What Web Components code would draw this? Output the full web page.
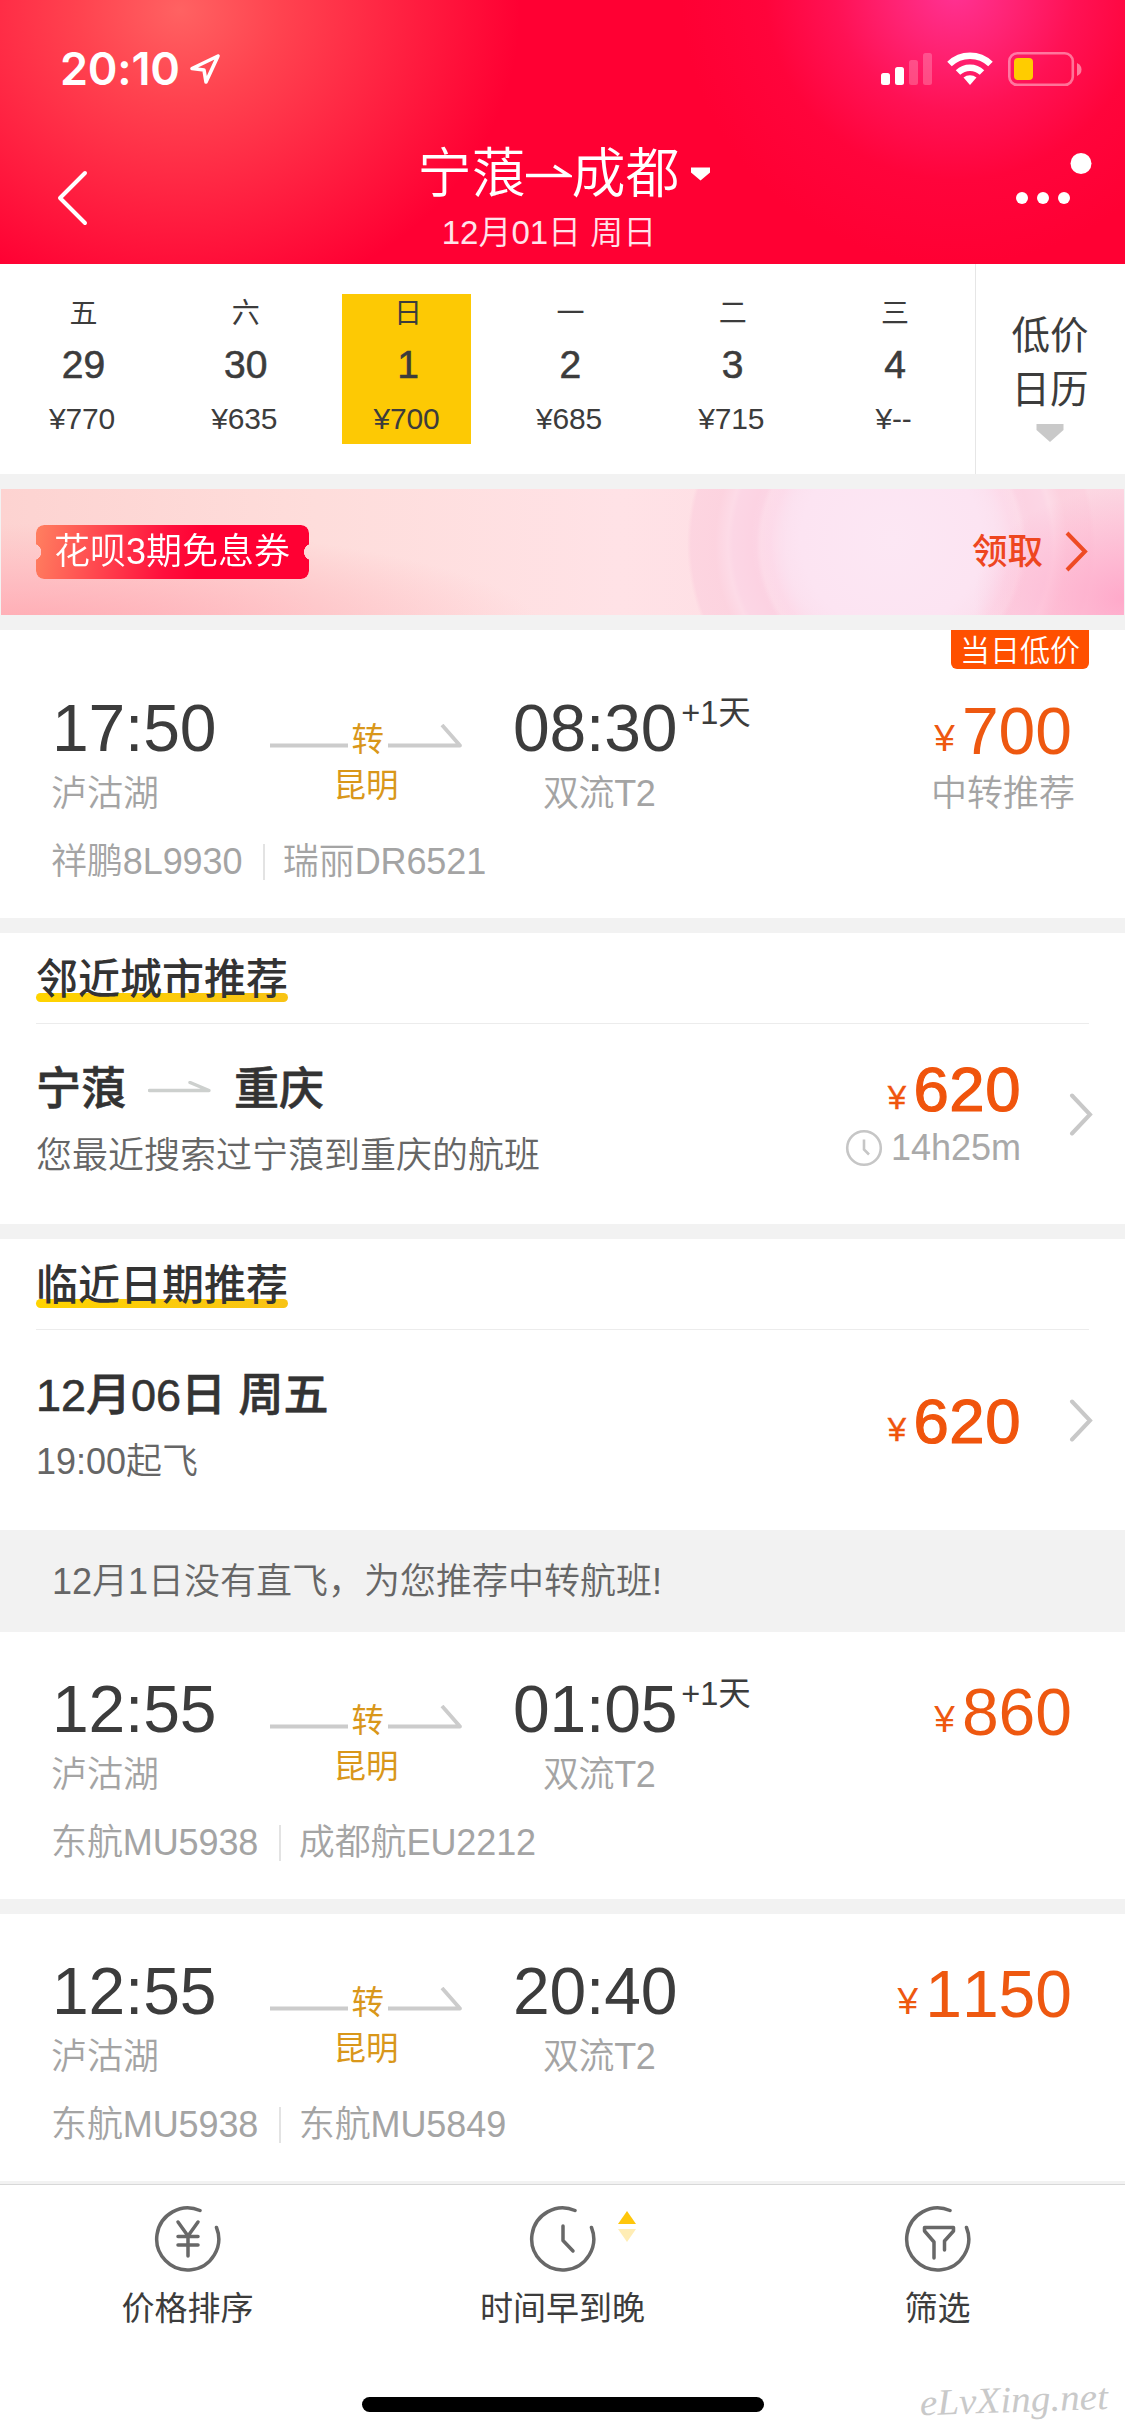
<!DOCTYPE html>
<html lang="zh-CN">
<head>
<meta charset="utf-8">
<title>宁蒗 → 成都</title>
<style>
html,body{margin:0;padding:0;background:#fff}
body{width:1125px;height:2436px;overflow:hidden;font-family:"Liberation Sans","Noto Sans CJK SC",sans-serif;color:#3c3c3c;font-kerning:none}
</style>
</head>
<body>
<flight-app></flight-app>
<script>
const define = (name, markup) => customElements.define(name, class extends HTMLElement {
  connectedCallback() {
    if (this.shadowRoot) return;
    const t = document.createElement('template');
    t.innerHTML = typeof markup === 'function' ? markup(this) : markup;
    this.attachShadow({mode: 'open'}).append(t.content.cloneNode(true));
  }
});

define('status-bar', `<style>
:host{display:flex;height:66px;padding:36px 43px 0 60px;align-items:center;color:#fff}
.t{font:600 45px/66px Inter,sans-serif;letter-spacing:-.2px}
.loc{margin-left:9px}.sp{flex:1}svg{display:block}
</style><span class="t">20:10</span>
<svg class="loc" width="32" height="32" viewBox="0 0 32 32"><path d="M29 3 L3 15.5 L15 17 L17 29 Z" fill="none" stroke="#fff" stroke-width="3.6" stroke-linejoin="round"/></svg>
<span class="sp"></span>
<svg width="202" height="36" viewBox="881 51 202 36"><g fill="#fff"><rect x="882" y="73" width="9" height="12" rx="2.5"/><rect x="896" y="67" width="9" height="18" rx="2.5"/><g opacity=".22"><rect x="910" y="60" width="9" height="25" rx="2.5"/><rect x="924" y="53" width="9" height="32" rx="2.5"/></g></g>
<g fill="none" stroke="#fff" stroke-width="6.500"><path d="M950.500 64 A29.500 29.500 0 0 1 991.500 64"/><path d="M959 72.500 A17.500 17.500 0 0 1 983 72.500"/></g><path d="M964.500 77.500 A10.500 10.500 0 0 1 977.500 77.500 L971 85Z" fill="#fff"/>
<rect x="1010.300" y="53.300" width="63.500" height="31.500" rx="8" fill="none" stroke="#fff" stroke-opacity=".42" stroke-width="2.6"/><rect x="1015" y="58" width="19" height="22" rx="4" fill="#ffcc00"/><path d="M1078 63 q4.500 2 4.500 6.500 t-4.500 6.500z" fill="#fff" opacity=".45"/></svg>`);

define('nav-bar', `<style>
:host{display:flex;height:162px;box-sizing:border-box;padding:0 30px 0 55px;color:#fff;font-weight:350;justify-content:space-between}
.back{margin-top:68px}.more{margin-top:50px}svg{display:block}
.mid{display:flex;flex-direction:column;align-items:center;width:300px;margin-left:23px}
.title{display:flex;font-size:54px;line-height:56px;margin-top:44px;white-space:nowrap;align-items:center}
.title svg{flex:none}.sub{font-size:33px;line-height:34px;margin:14px 29px 0 0;color:#ffe3ea;white-space:nowrap}
</style>
<svg class="back" width="34" height="56" viewBox="0 0 34 56"><path d="M30 3 L5 28 L30 53" fill="none" stroke="#fff" stroke-width="4" stroke-linecap="round" stroke-linejoin="round"/></svg>
<div class="mid"><div class="title"><slot name="from"></slot><svg width="46" height="30" viewBox="0 0 46 30"><path d="M0 16.500H43L28 7" fill="none" stroke="#fff" stroke-width="3.300"/></svg><slot name="to"></slot><svg width="30" height="30" viewBox="0 0 30 30"><path d="M11 8.500H30V13.500L20.500 21.500L11 13.500Z" fill="#fff"/></svg></div><div class="sub"><slot name="date"></slot></div></div>
<svg class="more" width="80" height="60" viewBox="1016 152 80 60"><g fill="#fff"><circle cx="1023" cy="198" r="6"/><circle cx="1044" cy="198" r="6"/><circle cx="1065" cy="198" r="6"/><circle cx="1082" cy="163.500" r="10.500"/></g></svg>`);

define('app-header', `<style>
:host{display:block;height:264px;background:radial-gradient(circle at 955px -10px,#ff3294 0,rgba(255,40,125,.88) 60px,rgba(255,28,105,.62) 120px,rgba(255,14,80,.28) 190px,rgba(255,0,60,0) 275px),radial-gradient(ellipse 340px 300px at 180px 10px,#ff6262 0,rgba(255,78,84,.85) 30%,rgba(255,0,51,0) 100%),#ff0033}
</style><slot></slot>`);

define('date-cell', el => `<style>
:host{display:flex;flex-direction:column;align-items:center;width:129px;height:150px;flex:none}
:host([active]){background:#fdc904}
span{padding-left:4px}
.w{font-size:28px;line-height:30px;margin-top:5px}
.n{font-size:39px;line-height:40px;margin-top:16px;-webkit-text-stroke:.6px #3c3c3c}
.p{font-size:30px;line-height:32px;margin-top:18px;padding:0 0 0 1px;letter-spacing:-.2px}
</style><span class="w">${el.getAttribute('week')}</span><span class="n">${el.getAttribute('day')}</span><span class="p">¥<slot></slot></span>`);

define('date-strip', `<style>
:host{display:flex;height:210px;background:#fff}
.days{display:flex;width:976px;box-sizing:border-box;padding:30px 0 0 17px;gap:33.300px;overflow:hidden;border-right:1.500px solid #e6e6e6;flex:none}
.cal{flex:1;display:flex;flex-direction:column;align-items:center;font-size:38.500px;line-height:54px;padding:45px 1px 0 0;font-weight:400}
svg{display:block;margin-top:6px}
</style><div class="days"><slot></slot></div><div class="cal"><span>低价</span><span>日历</span><svg width="28" height="20"><path d="M.5 1H27.500V7L14 19L.5 7Z" fill="#c9c9c9"/></svg></div>`);

define('coupon-banner', `<style>
:host{display:block;height:126px;margin:15px 0;background:#f2f2f2;padding:0 1px}
.b{height:126px;box-sizing:border-box;padding:0 35px;display:flex;align-items:center;justify-content:space-between;overflow:hidden;
background:radial-gradient(ellipse 150px 110px at 1123px 110px,#ffa9ca 0,rgba(255,169,202,0) 100%),
radial-gradient(circle at 890px 50px,#fce7f4 0,#fce4f2 90px,rgba(252,220,238,0) 140px),
radial-gradient(circle at 890px 55px,#fbdff0 0,#fbdcea 104px,#fdd4e4 120px,#fdd9e6 130px,#fcd2e2 135px,#fcd6e5 158px,#fddbe7 163px,rgba(252,208,222,.8) 176px,rgba(252,208,222,.7) 200px,rgba(254,220,228,0) 204px),
radial-gradient(ellipse 520px 105px at 20px 140px,#ffaab2 0,rgba(255,178,186,.8) 35%,rgba(255,210,210,0) 100%),
linear-gradient(90deg,#fdd3d1 0,#fedddb 28%,#ffe2e6 55%,#fcd6e2 100%)}
.c{display:flex;align-items:center;width:273px;height:54px;box-sizing:border-box;padding-left:18px;color:#fff;font-size:36px;line-height:56px;border-radius:8px;white-space:nowrap;font-weight:350;
background:linear-gradient(100deg,#ff8060 0,#ff5553 18%,#ff0f3c 48%,#f03 60%,#f03 100%);
-webkit-mask:radial-gradient(circle at -3px 50%,transparent 8px,#000 8.500px) left/51% 100% no-repeat,radial-gradient(circle at calc(100% + 3px) 50%,transparent 8px,#000 8.500px) right/51% 100% no-repeat}
.g{display:flex;align-items:center;gap:21px;font-size:35.500px;font-weight:500;color:#ee4620;line-height:38px}
svg{display:block}
</style><div class="b"><div class="c"><slot></slot></div><div class="g"><slot name="action"></slot><svg width="25" height="42" viewBox="0 0 25 42"><path d="M3 2L21 20.500L3 39" fill="none" stroke="#ee4b24" stroke-width="4"/></svg></div></div>`);

define('flight-card', el => {
  const a = n => el.getAttribute(n) || '';
  return `<style>
:host{display:block;position:relative;box-sizing:border-box;background:#fff;padding:44px 50px 39px 51px}
:host([badge]){padding-top:65px}
.m{display:flex;height:116px}
.time{font-size:66px;line-height:66px;white-space:nowrap;padding-left:1px;letter-spacing:-.2px}
.g{font-size:36px;line-height:36px;margin-top:15px;color:#a4a4a4;font-weight:350;white-space:nowrap}
.dep{width:219px}.via{width:194px;display:flex;flex-direction:column;align-items:center;color:#d9971a;font-size:32.500px;line-height:33px;padding-top:29px;box-sizing:border-box}
.l{display:flex;width:194px;justify-content:space-between}.l span{width:33px}svg{display:block}
.city{margin:13px 2px 0 0}
.arr{margin-left:48px;flex:1}.arr .g{padding-left:31px;letter-spacing:-.4px}
.top{display:flex;align-items:flex-start}.next{font-size:32.500px;line-height:34px;margin-left:4px;margin-top:1px;white-space:nowrap}
.pr{display:flex;flex-direction:column;align-items:flex-end}
.p{color:#ee5810;font-size:66px;line-height:66px;margin-top:3px;padding-right:3px;white-space:nowrap}
.p small{font-size:37px;line-height:1;vertical-align:3px;margin-right:7px}
.pr .g{margin-top:12px}
.f{display:flex;margin-top:33px;height:35px;font-size:36px;line-height:36px;color:#a4a4a4;font-weight:350;letter-spacing:-.1px}
.f i{width:1.500px;height:36px;background:#e3e3e3;margin:0 18px 0 21px}
.badge{position:absolute;right:36px;top:0;width:138px;height:39px;border-radius:0 0 6px 6px;background:#ff5000;color:#fff;font-size:30px;line-height:41px;text-align:center;font-weight:350}
</style>
<div class="m"><div class="dep"><div class="time">${a('dep')}</div><div class="g">${a('from')}</div></div>
<div class="via"><div class="l"><svg width="78" height="33"><path d="M0 21.500H78" stroke="#ccc" stroke-width="3.800"/></svg><span>转</span><svg width="76" height="33"><path d="M0 21.500H72L54 1" fill="none" stroke="#ccc" stroke-width="3.800" stroke-linejoin="round"/></svg></div><div class="city">${a('via')}</div></div>
<div class="arr"><div class="top"><span class="time">${a('arr')}</span>${a('next') ? `<span class="next">${a('next')}</span>` : ''}</div><div class="g">${a('to')}</div></div>
<div class="pr"><div class="p"><small>¥</small>${a('price')}</div>${a('note') ? `<div class="g">${a('note')}</div>` : ''}</div></div>
<div class="f"><span>${a('leg1')}</span><i></i><span>${a('leg2')}</span></div>
${a('badge') ? `<div class="badge">${a('badge')}</div>` : ''}`;
});

define('suggest-card', `<style>
:host{display:block;height:291px;background:#fff;padding:0 36px;box-sizing:border-box}
.h{height:91px;box-sizing:border-box;padding-top:25px;border-bottom:1.500px solid #ececec}
.t{position:relative;display:inline-block;font-size:42px;line-height:44px;font-weight:500;color:#333;z-index:0;vertical-align:top}
.t::before{content:"";position:absolute;left:0;right:0;top:35px;height:9px;border-radius:4.500px;background:linear-gradient(100deg,#ffd400,#f8c315);z-index:-1}
.r{display:flex;align-items:center;height:181px}
.a{display:flex;flex-direction:column;padding-top:11px;flex:1}
.x{display:flex;align-items:center;font-size:45px;line-height:45px;font-weight:500;color:#333;white-space:pre;-webkit-text-stroke:.6px #333}
.y{font-size:36px;line-height:36px;margin-top:26px;color:#666;font-weight:350}
.b{display:flex;flex-direction:column;align-items:flex-end}
.p{color:#f0540c;font-size:63.500px;line-height:62px;white-space:nowrap;-webkit-text-stroke:1.200px #f0540c;letter-spacing:.5px}
.p small{font-size:33px;line-height:1;vertical-align:2px;margin-right:7px;-webkit-text-stroke:.4px #f0540c}
svg{display:block;margin-left:48px}
</style><div class="h"><span class="t"><slot name="title"></slot></span></div>
<div class="r"><div class="a"><div class="x"><slot></slot></div><div class="y"><slot name="sub"></slot></div></div>
<div class="b"><div class="p"><small>¥</small><slot name="price"></slot></div><slot name="extra"></slot></div>
<svg width="24" height="44" viewBox="0 0 24 44" style="margin-right:-4px"><path d="M3 2.500L21 21.500L3 40.500" fill="none" stroke="#c8c8c8" stroke-width="4" stroke-linecap="round"/></svg></div>`);

define('route-arrow', `<style>:host{display:block;margin:0 22px}svg{display:block}</style><svg width="64" height="16" viewBox="0 0 64 16"><path d="M1.500 9.500H61L42 1.500" fill="none" stroke="#cdd0ce" stroke-width="3.400" stroke-linecap="round" stroke-linejoin="round"/></svg>`);

define('trip-duration', `<style>:host{display:flex;align-items:center;gap:8px;height:36px;margin-top:10px;margin-bottom:6px;font-size:36px;line-height:36px;color:#a9a9a9}svg{display:block}</style><svg width="38" height="38" viewBox="0 0 38 38"><g fill="none" stroke="#c6c6c6" stroke-width="2.600"><circle cx="19" cy="19" r="16.800"/><path d="M19 10.500V20.500L24 25.500"/></g></svg><slot></slot>`);

define('list-notice', `<style>:host{display:block;height:102px;line-height:104px;padding-left:52px;background:#f2f2f2;color:#666;font-size:36px;font-weight:350}</style><slot></slot>`);

define('list-gap', `<style>:host{display:block;height:15px;background:#f2f2f2}</style>`);

const glyphs = {
  price: '<path d="M24 17L34 31L44 17M34 31V51M24 31.500H44M24 40H44"/>',
  time: '<path d="M34 21V35.500L44 46"/>',
  filter: '<path d="M30 53V37L20.500 26V22.500H49.500V26L40.500 36V45"/>'
};
define('tool-item', el => `<style>
:host{display:flex;flex-direction:column;align-items:center;flex:1;padding-top:20px}
.i{position:relative}svg{display:block}.s{position:absolute;left:88px;top:6px}
.t{font-size:33px;line-height:36px;margin-top:18px;white-space:nowrap}
</style><div class="i"><svg width="68" height="68" viewBox="0 0 68 68"><g fill="none" stroke="#686868" stroke-width="3.500" stroke-linecap="round" stroke-linejoin="round"><path d="M46 5.500A31 31 0 1 0 62.500 22.500"/>${glyphs[el.getAttribute('icon')]}</g></svg>
${el.hasAttribute('sorted') ? '<svg class="s" width="20" height="34"><path d="M1 13L10 0L19 13Z" fill="#ffc60a"/><path d="M1 18H19L10 31Z" fill="#ffedb5"/></svg>' : ''}</div><span class="t"><slot></slot></span>`);

define('tool-bar', `<style>
:host{display:flex;flex-direction:column;position:relative;height:255px;box-sizing:border-box;border-top:3px solid #f2f2f2;background:#fff}
.r{display:flex;height:213px;border-top:1.500px solid #d8d8d8;box-sizing:border-box}
.h{width:402px;height:15px;border-radius:8px;background:#000;margin-left:362px}
.w{position:absolute;right:5px;top:189px;width:204px;height:60px}
</style><div class="r"><slot></slot></div><div class="h"></div>
<svg class="w" viewBox="0 0 204 60"><text x="4" y="39" textLength="188" lengthAdjust="spacingAndGlyphs" transform="rotate(-2 100 30)" font-family="Liberation Serif" font-style="italic" font-size="37" fill="#c9c9c9">eLvXing.net</text></svg>`);

define('flight-app', `<style>:host{display:block;width:1125px;height:2436px;background:#f2f2f2}</style>
<app-header><status-bar></status-bar><nav-bar><span slot="from">宁蒗</span><span slot="to">成都</span><span slot="date">12月01日 周日</span></nav-bar></app-header>
<date-strip><date-cell week="五" day="29">770</date-cell><date-cell week="六" day="30">635</date-cell><date-cell week="日" day="1" active>700</date-cell><date-cell week="一" day="2">685</date-cell><date-cell week="二" day="3">715</date-cell><date-cell week="三" day="4">--</date-cell></date-strip>
<coupon-banner>花呗3期免息券<span slot="action">领取</span></coupon-banner>
<flight-card badge="当日低价" dep="17:50" from="泸沽湖" via="昆明" arr="08:30" next="+1天" to="双流T2" price="700" note="中转推荐" leg1="祥鹏8L9930" leg2="瑞丽DR6521"></flight-card>
<list-gap></list-gap>
<suggest-card><span slot="title">邻近城市推荐</span>宁蒗<route-arrow></route-arrow>重庆<span slot="sub">您最近搜索过宁蒗到重庆的航班</span><span slot="price">620</span><trip-duration slot="extra">14h25m</trip-duration></suggest-card>
<list-gap></list-gap>
<suggest-card><span slot="title">临近日期推荐</span>12月06日 周五<span slot="sub">19:00起飞</span><span slot="price">620</span></suggest-card>
<list-notice>12月1日没有直飞，为您推荐中转航班!</list-notice>
<flight-card dep="12:55" from="泸沽湖" via="昆明" arr="01:05" next="+1天" to="双流T2" price="860" leg1="东航MU5938" leg2="成都航EU2212"></flight-card>
<list-gap></list-gap>
<flight-card dep="12:55" from="泸沽湖" via="昆明" arr="20:40" to="双流T2" price="1150" leg1="东航MU5938" leg2="东航MU5849"></flight-card>
<tool-bar><tool-item icon="price">价格排序</tool-item><tool-item icon="time" sorted>时间早到晚</tool-item><tool-item icon="filter">筛选</tool-item></tool-bar>`);
</script>
</body>
</html>
